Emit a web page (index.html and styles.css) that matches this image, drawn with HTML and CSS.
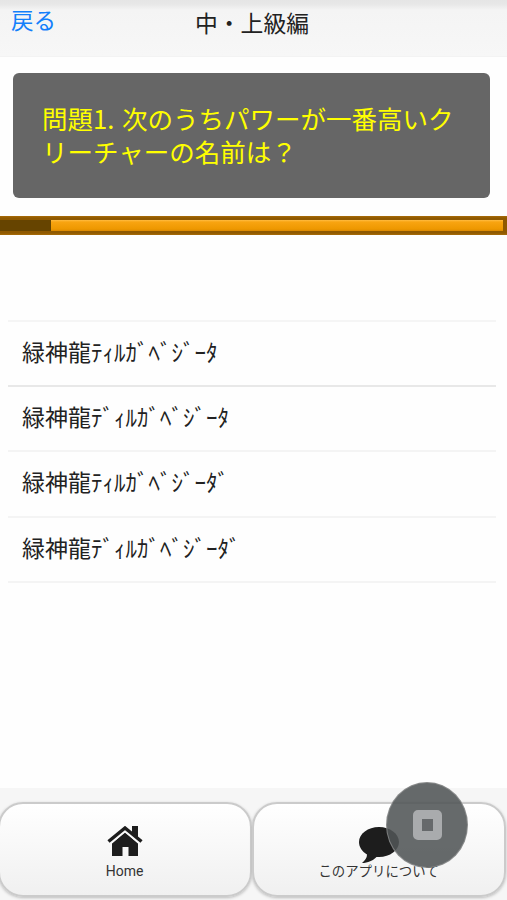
FILE: index.html
```html
<!DOCTYPE html>
<html lang="ja">
<head>
<meta charset="utf-8">
<title>中・上級編</title>
<link rel="stylesheet" href="styles.css">
</head>
<body>
<div class="app">
  <header class="bar">
    <a class="back">戻る</a>
    <h1 class="title">中・上級編</h1>
  </header>
  <main class="content">
    <div class="question">問題1. 次のうちパワーが一番高いクリーチャーの名前は？</div>
    <div class="timer"><div class="elapsed"></div><div class="remaining"></div></div>
    <ul class="answers">
      <li>緑神龍ﾃｨﾙｶﾞﾍﾞｼﾞｰﾀ</li>
      <li>緑神龍ﾃﾞｨﾙｶﾞﾍﾞｼﾞｰﾀ</li>
      <li>緑神龍ﾃｨﾙｶﾞﾍﾞｼﾞｰﾀﾞ</li>
      <li>緑神龍ﾃﾞｨﾙｶﾞﾍﾞｼﾞｰﾀﾞ</li>
    </ul>
  </main>
  <nav class="tabs">
    <a class="tab">
      <svg class="home-icon" width="36" height="31" viewBox="0 0 36 31"><path d="M18 6 31 17.500V30H21.500v-9h-6v9H5V17.500z"/><path d="M1.500 16.500 18 3 34.500 16.500" fill="none" stroke="#f9f9f9" stroke-width="5.500"/><path d="M1.500 15.500 18 2 34.500 15.500" fill="none" stroke="#1d1d1d" stroke-width="3.400"/><path d="M25 0h6v12l-6-5z"/></svg>
      <span class="home-label">Home</span>
    </a>
    <a class="tab">
      <svg class="chat-icon" width="40" height="36" viewBox="0 0 40 36"><path d="M20 0C31 0 40 6.700 40 15s-9 15-20 15h-2.500C14 33.500 9 36 3 36c3-3 5-5 5-8.500C3 24.500 0 20 0 15 0 6.700 9 0 20 0z"/></svg>
      <span class="about-label">このアプリについて</span>
    </a>
  </nav>
  <div class="assist"><div class="assist-square"></div></div>
</div>
</body>
</html>
```
FILE: styles.css
```css
* { box-sizing: border-box; }
body { margin: 0; background: #fefefe; color: #222; font-family: "Noto Sans CJK JP", sans-serif; font-weight: 400; }
.app { position: relative; width: 507px; height: 900px; overflow: hidden; display: flex; flex-direction: column; }
.bar { height: 57px; display: grid; grid-template-columns: 195px 1fr; background: linear-gradient(#e5e5e5 0, #e7e7e7 4px, #f4f4f4 10px, #f7f7f7 100%); border-bottom: 1px solid #f3f3f3; }
.back { padding: 3px 0 0 11px; font-size: 22.500px; line-height: 33px; color: #137ffb; }
.title { margin: 0; padding-top: 6px; font-size: 22.800px; line-height: 33px; font-weight: 400; color: #222; white-space: nowrap; }
.content { flex: 1; }
.question { margin: 16px 17px 0 13px; height: 125px; padding: 28px 20px 0 29px; border-radius: 6px; background: #666; color: #ff0; font-size: 25.500px; line-height: 33px; word-spacing: 2px; word-break: break-all; }
.timer { margin-top: 18px; height: 19px; padding: 4px 4px 4px 0; display: flex; background: linear-gradient(#a96c08 0, #8f5900 2px, #8f5900 17px, #a96c08 19px); }
.elapsed { width: 51px; background: #664400; }
.remaining { flex: 1; background: linear-gradient(#ffbd42 0, #f8a411 2px, #ee9800 9px, #d98800 11px); }
.answers { list-style: none; margin: 85px 11px 0 8px; padding: 0; border-top: 2px solid #f5f5f5; }
.answers li { height: 65.200px; padding: 0 0 4px 14px; display: flex; align-items: center; font-size: 23px; line-height: 35px; color: #222; white-space: nowrap; border-bottom: 2px solid #f4f4f4; }
.answers li:first-child { border-color: #e8e8e8; }
.tabs { height: 112px; display: grid; grid-template-columns: 254px 254px; gap: 0; margin: 0 0 0 -2px; padding: 14px 0 3px; background: #f6f6f6; }
.tab { display: flex; flex-direction: column; align-items: center; padding-right: 1px; border: 2px solid #cbcbcb; border-radius: 25px; background: linear-gradient(#fff, #f0f0f0); box-shadow: 0 1px 3px #bbb; }
.tab svg { fill: #1d1d1d; }
.home-icon { margin-top: 22px; }
.home-label { font: 400 14px/20px Roboto, sans-serif; margin-top: 4px; color: #333; }
.chat-icon { margin-top: 23px; }
.about-label { font-size: 13.400px; line-height: 20px; margin-top: -3px; color: #333; }
.assist { position: absolute; left: 386px; top: 782px; width: 82px; height: 86px; border-radius: 50%; display: flex; align-items: center; justify-content: center; background: rgba(81,85,86,.88); border: 1px solid rgba(160,160,160,.6); }
.assist-square { width: 29px; height: 30px; border: 9px solid #a9abad; border-radius: 5px; background: #66696b; }
```
